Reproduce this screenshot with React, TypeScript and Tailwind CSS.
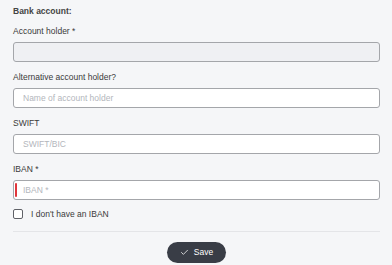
import React, { useState } from 'react';
import { Check } from 'lucide-react';

const Field: React.FC<{ label: string; placeholder?: string; disabled?: boolean; error?: boolean }> = ({
  label,
  placeholder,
  disabled,
  error,
}) => (
  <div className="flex flex-col">
    <label className="text-[8.5px] leading-[12px] text-[#3a3a3a] mb-[5px]">{label}</label>
    <div className="relative">
      {error && <span className="absolute left-[2px] top-[3px] w-[2px] h-[14px] bg-[#e0353b] rounded-[1px]" />}
      <input
        disabled={disabled}
        placeholder={placeholder}
        className={`block w-full h-[20px] rounded-[3px] border border-[#a4a6aa] px-[9px] text-[8.5px] text-[#333] placeholder-[#b3b6bc] outline-none ${
          disabled ? 'bg-[#eff0f3]' : 'bg-white'
        }`}
      />
    </div>
  </div>
);

export default function App() {
  const [noIban, setNoIban] = useState(false);

  return (
    <div className="w-[392px] h-[265px] bg-[#f5f6f8] pl-[13px] pr-[12px] pt-[5px] font-['Liberation_Sans',Arial,sans-serif] overflow-hidden">
      {/* Header */}
      <p className="text-[8.5px] leading-[12px] font-bold text-[#444] mb-[8px]">Bank account:</p>

      <div className="flex flex-col gap-[9px]">
        <Field label="Account holder *" disabled />
        <Field label="Alternative account holder?" placeholder="Name of account holder" />
        <Field label="SWIFT" placeholder="SWIFT/BIC" />
        <Field label="IBAN *" placeholder="IBAN *" error />
      </div>

      {/* Checkbox */}
      <label className="flex items-center gap-[8px] mt-[9px] h-[10px]">
        <span
          onClick={() => setNoIban(!noIban)}
          className="w-[10px] h-[10px] rounded-[2px] border border-[#5f6167] bg-white shrink-0"
        />
        <span className="text-[8.5px] leading-[12px] text-[#3a3a3a]">I don't have an IBAN</span>
      </label>

      <div className="border-t border-[#e4e5e8] mt-[12px]" />

      <div className="flex justify-center mt-[10px]">
        <button className="flex items-center gap-[5px] h-[21px] px-[13px] rounded-full bg-[#393d46] text-white text-[8.5px]">
          <Check size={9} strokeWidth={2} />
          Save
        </button>
      </div>
    </div>
  );
}
